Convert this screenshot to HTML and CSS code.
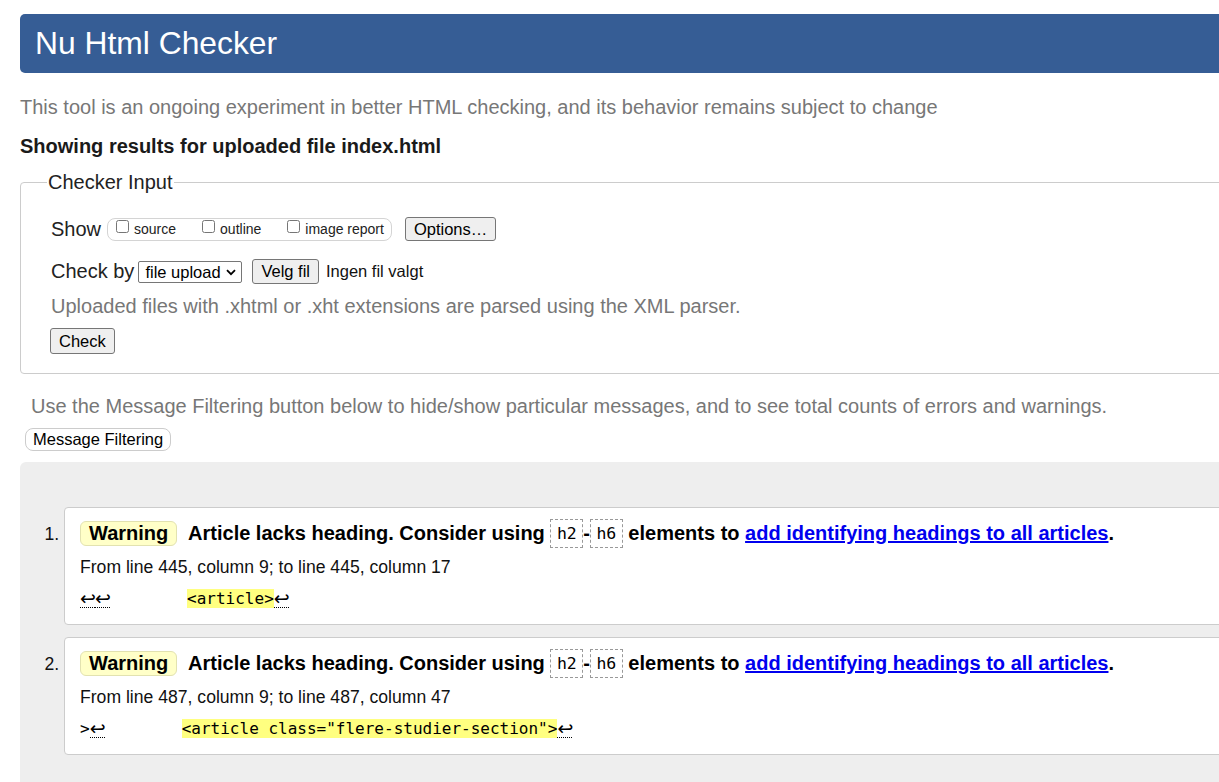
FILE: index.html
```html
<!DOCTYPE html>
<html lang="en">
<head>
<meta charset="utf-8">
<title>Nu Html Checker</title>
<link rel="stylesheet" href="styles.css">
</head>
<body>
<div class="page">
  <h1 class="title">Nu Html Checker</h1>
  <p class="intro">This tool is an ongoing experiment in better HTML checking, and its behavior remains subject to change</p>
  <h2 class="results-for">Showing results for uploaded file index.html</h2>

  <fieldset class="checker-input">
    <legend class="legend">Checker Input</legend>
    <div class="row show-row">
      <span class="row-label">Show</span>
      <span class="show-group">
        <label class="opt"><input type="checkbox" class="cb">source</label>
        <label class="opt"><input type="checkbox" class="cb">outline</label>
        <label class="opt last"><input type="checkbox" class="cb">image report</label>
      </span>
      <button class="btn options-btn" type="button">Options…</button>
    </div>
    <div class="row checkby-row">
      <span class="row-label">Check by</span>
      <span class="select-wrap">
        <select class="select"><option>file upload</option></select>
        <svg class="chev" width="10" height="7" viewBox="0 0 10 7"><path d="M1 1.2 L5 5.2 L9 1.2" fill="none" stroke="#000" stroke-width="1.8"/></svg>
      </span>
      <button class="btn file-btn" type="button">Velg fil</button>
      <span class="file-name">Ingen fil valgt</span>
    </div>
    <p class="note">Uploaded files with .xhtml or .xht extensions are parsed using the XML parser.</p>
    <div class="row check-row">
      <button class="btn check-btn" type="submit">Check</button>
    </div>
  </fieldset>

  <p class="filter-note">Use the Message Filtering button below to hide/show particular messages, and to see total counts of errors and warnings.</p>
  <button class="filter-btn" type="button">Message Filtering</button>

  <div class="results">
    <ol class="messages">
      <li class="msg">
        <p class="msg-text"><span class="badge">Warning</span> Article lacks heading. Consider using <code class="tag">h2</code>-<code class="tag">h6</code> elements to <a class="msg-link" href="#">add identifying headings to all articles</a>.</p>
        <p class="location">From line 445, column 9; to line 445, column 17</p>
        <p class="extract"><span class="lf">↩</span><span class="lf">↩</span>        <mark class="hl">&lt;article&gt;</mark><span class="lf">↩</span></p>
      </li>
      <li class="msg">
        <p class="msg-text"><span class="badge">Warning</span> Article lacks heading. Consider using <code class="tag">h2</code>-<code class="tag">h6</code> elements to <a class="msg-link" href="#">add identifying headings to all articles</a>.</p>
        <p class="location">From line 487, column 9; to line 487, column 47</p>
        <p class="extract">&gt;<span class="lf">↩</span>        <mark class="hl">&lt;article class="flere-studier-section"&gt;</mark><span class="lf">↩</span></p>
      </li>
    </ol>
  </div>
</div>
</body>
</html>
```

FILE: styles.css
```css
html, body {
  overflow: hidden;
}
body {
  margin: 0;
  padding: 14px 0 0 20px;
  font-family: "Liberation Sans", Arial, sans-serif;
  color: #111;
  background: #fff;
}
.page {
  width: 1260px;
}
.title {
  margin: 0;
  height: 59px;
  line-height: 59px;
  padding-left: 15px;
  background: #365d95;
  color: #fff;
  font-size: 31.8px;
  font-weight: normal;
  border-radius: 5px 0 0 5px;
}
.intro {
  margin: 22px 0 0;
  font-size: 20px;
  line-height: 24px;
  color: #777;
}
.results-for {
  margin: 15px 0 0;
  font-size: 20px;
  line-height: 24px;
  font-weight: bold;
  color: #1a1a1a;
}
.checker-input {
  margin: 13px 0 0;
  padding: 23px 0 19px 30px;
  border: 1px solid #ccc;
  border-radius: 4px 0 0 4px;
  min-width: 0;
}
.legend {
  padding: 0 1px;
  margin-left: -4px;
  font-size: 20px;
  line-height: 23px;
  color: #222;
}
.row {
  display: flex;
  align-items: center;
}
.row-label {
  font-size: 20px;
  color: #222;
}
.show-row {
  height: 24px;
}
.show-group {
  display: inline-flex;
  align-items: center;
  height: 21px;
  margin-left: 6px;
  padding: 0 0 0 8px;
  border: 1px solid #d4d4d4;
  border-radius: 8px;
}
.opt {
  display: inline-flex;
  align-items: center;
  font-size: 14px;
  color: #222;
  margin-right: 26px;
  line-height: 21px;
}
.opt.last {
  margin-right: 7px;
}
.cb {
  width: 13px;
  height: 13px;
  margin: 0 5px 5px 0;
}
.btn {
  font-family: "Liberation Sans", Arial, sans-serif;
  font-size: 16.5px;
  color: #000;
  background: #efefef;
  border: 1px solid #767676;
  border-radius: 3px;
  padding: 0 8px;
}
.options-btn {
  height: 24px;
  margin-left: 13px;
}
.checkby-row {
  margin-top: 18px;
  height: 25px;
}
.select-wrap {
  position: relative;
  display: inline-block;
  margin-left: 4px;
  height: 22px;
}
.select {
  appearance: none;
  -webkit-appearance: none;
  width: 104px;
  height: 22px;
  padding: 0 0 0 6px;
  border: 1px solid #767676;
  border-radius: 2px;
  background: #fff;
  color: #000;
  font-family: "Liberation Sans", Arial, sans-serif;
  font-size: 16.5px;
}
.chev {
  position: absolute;
  right: 6px;
  top: 8px;
}
.file-btn {
  height: 25px;
  margin-left: 10px;
}
.file-name {
  margin-left: 7px;
  font-size: 16.5px;
  color: #111;
}
.note {
  margin: 10px 0 0;
  font-size: 20px;
  line-height: 24px;
  color: #777;
}
.check-row {
  margin-top: 10px;
  margin-left: -1px;
}
.check-btn {
  height: 26px;
}
.filter-note {
  margin: 20px 0 0 11px;
  font-size: 20px;
  line-height: 24px;
  color: #777;
}
.filter-btn {
  display: block;
  margin: 10px 0 0 5px;
  height: 23px;
  padding: 0 7px;
  background: #fff;
  border: 1px solid #ccc;
  border-radius: 8px;
  font-family: "Liberation Sans", Arial, sans-serif;
  font-size: 16.5px;
  color: #000;
}
.results {
  margin-top: 11px;
  padding: 45px 0 40px;
  background: #eee;
  border-radius: 6px 0 0 0;
}
.messages {
  margin: 0;
  padding-left: 44px;
  list-style: decimal outside;
  font-size: 17.6px;
}
.msg {
  background: #fff;
  border: 1px solid #ccc;
  border-radius: 4px 0 0 4px;
  padding: 11px 0 16px 15px;
  margin-bottom: 12px;
  line-height: 29px;
}
.msg::marker {
  font-size: 17.6px;
  color: #111;
}
.msg-text {
  margin: 0;
  font-size: 20px;
  line-height: 29px;
  font-weight: bold;
  color: #000;
}
.badge {
  display: inline-block;
  vertical-align: top;
  margin-top: 2px;
  margin-right: 6px;
  padding: 0 8px;
  line-height: 23px;
  background: #ffffc8;
  border: 1px solid #e2e2b0;
  border-radius: 6px;
}
.tag {
  display: inline-block;
  vertical-align: top;
  padding: 0 5.5px;
  line-height: 27px;
  border: 1px dashed #999;
  font-family: "DejaVu Sans Mono", "Liberation Mono", monospace;
  font-size: 16.5px;
  font-weight: normal;
  color: #000;
}
.msg-link {
  color: #00e;
  text-decoration: underline;
}
.location {
  margin: 8px 0 0;
  font-size: 17.6px;
  line-height: 22px;
  color: #111;
}
.extract {
  margin: 11px 0 0;
  font-family: "DejaVu Sans Mono", "Liberation Mono", monospace;
  font-size: 16px;
  line-height: 19px;
  white-space: pre;
  color: #000;
}
.hl {
  background: #ffff80;
  color: #000;
}
.lf {
  display: inline-block;
  width: 15px;
  text-align: center;
  line-height: 18px;
  border-bottom: 1px dotted #000;
  font-family: "DejaVu Sans", sans-serif;
  font-size: 19px;
  vertical-align: top;
}
```
